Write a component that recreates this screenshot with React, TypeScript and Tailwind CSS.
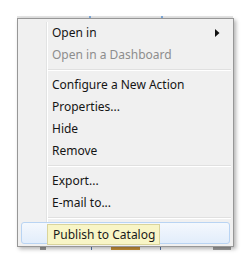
import React from "react";

type Item =
  | { kind: "item"; label: string; disabled?: boolean; submenu?: boolean; active?: boolean }
  | { kind: "sep" };

const items: Item[] = [
  { kind: "item", label: "Open in", submenu: true },
  { kind: "item", label: "Open in a Dashboard", disabled: true },
  { kind: "sep" },
  { kind: "item", label: "Configure a New Action" },
  { kind: "item", label: "Properties..." },
  { kind: "item", label: "Hide" },
  { kind: "item", label: "Remove" },
  { kind: "sep" },
  { kind: "item", label: "Export..." },
  { kind: "item", label: "E-mail to..." },
  { kind: "sep" },
  { kind: "item", label: "Publish to Catalog", active: true },
];

function MenuRow({ item }: { item: Extract<Item, { kind: "item" }> }) {
  if (item.active) {
    return (
      <div className="relative mx-[1px] flex h-[22px] items-center rounded-[3px] border border-[#b9d4f3] bg-gradient-to-b from-[#f4f8fd] to-[#e2edfb]">
        {/* tooltip lies over the highlighted row */}
        <div className="absolute left-[25px] top-[1px] flex h-[21px] items-center border border-[#d9d49c] bg-[#f8f5c6] pl-[5px] pr-[4px] text-[#1a1a1a]">
          {item.label}
        </div>
      </div>
    );
  }
  return (
    <div className="flex h-[22px] items-center pl-[32px] pr-[11px]">
      <span className={`flex-1 ${item.disabled ? "text-[#8d8d8d]" : "text-[#151515]"}`}>
        {item.label}
      </span>
      {item.submenu ? (
        <svg width="5" height="8" viewBox="0 0 5 8">
          <path d="M0 0 L4.5 4 L0 8 Z" fill="#111" />
        </svg>
      ) : null}
    </div>
  );
}

export default function App() {
  return (
    <div
      className="flex h-[267px] w-[251px] flex-col overflow-hidden bg-white pl-[17px] pt-[16px] text-[12px] leading-none"
      style={{ fontFamily: '"Segoe UI", "Noto Sans", sans-serif' }}
    >
      {/* toolbar behind the menu, top edge */}
      <div className="flex h-[2px] w-[216px] bg-[#e4e4e4]">
        <div className="w-[72px]" />
        <div className="w-[2px] bg-[#7fa8d8]" />
        <div className="w-[70px]" />
        <div className="w-[2px] bg-[#7fa8d8]" />
      </div>

      <div className="relative z-10 w-[217px] border border-[#979797] bg-[#f0f0f0] px-[2px] pb-[2px] pt-[3px] shadow-[2px_2px_4px_rgba(0,0,0,0.3)]">
        <div className="flex flex-col bg-[linear-gradient(to_right,transparent_26px,#e2e3e3_26px,#e2e3e3_27px,#ffffff_27px,#ffffff_28px,transparent_28px)]">
          {items.map((it, i) =>
            it.kind === "sep" ? (
              <div key={i} className="flex h-[8px] flex-col justify-center pl-[28px]">
                <div className="h-[1px] bg-[#e0e0e0]" />
                <div className="h-[1px] bg-white" />
              </div>
            ) : (
              <MenuRow key={i} item={it} />
            ),
          )}
        </div>
      </div>

      {/* toolbar behind the menu, bottom edge */}
      <div className="flex h-[3px]">
        <div className="w-[23px]" />
        <div className="w-[6px] bg-[#9a9a9a]" />
        <div className="w-[45px]" />
        <div className="w-[1px] bg-[#5577aa]" />
        <div className="w-[19px]" />
        <div className="w-[29px] bg-[#c8923a]" />
        <div className="w-[20px]" />
        <div className="w-[1px] bg-[#5577aa]" />
        <div className="w-[52px]" />
        <div className="w-[18px] bg-[#a0a0a0]" />
      </div>
    </div>
  );
}
